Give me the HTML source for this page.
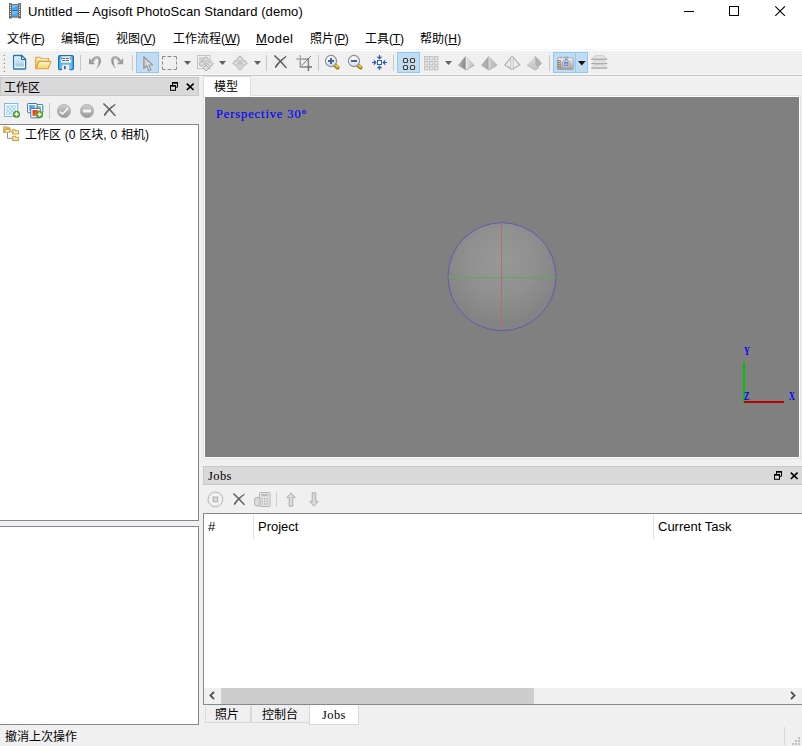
<!DOCTYPE html>
<html lang="zh-CN">
<head>
<meta charset="utf-8">
<title>Untitled — Agisoft PhotoScan Standard (demo)</title>
<style>
*{box-sizing:border-box;margin:0;padding:0}
html,body{width:802px;height:746px;overflow:hidden}
body{position:relative;background:#f0f0f0;font-family:"Liberation Sans","Noto Sans CJK SC",sans-serif;font-size:12px;color:#000}
.abs{position:absolute}
#titlebar{left:0;top:0;width:802px;height:30px;background:#fff}
#title{left:28px;top:4px;font-size:13px;letter-spacing:0.07px;line-height:16px;white-space:nowrap}
#menubar{left:0;top:30px;width:802px;height:19px;background:#fff}
.mi{position:absolute;top:31px;font-size:12px;line-height:16px;white-space:nowrap}
.mi u{text-decoration:underline;text-underline-offset:1px}
#toolbar{left:0;top:49px;width:802px;height:26px;background:#f0f0f0}
.sep{position:absolute;top:55px;width:1px;height:16px;background:#c8c8c8}
.hl{position:absolute;background:#c0dcf3;border:1px solid #90c8f6}
.docktitle{position:absolute;background:#d9d9d9;border:1px solid #c8c8c8;height:19px}
.box{position:absolute;background:#fff;border:1px solid #828790}
.ser{font-family:"Liberation Serif",serif}
.mono{font-family:"Liberation Mono",monospace}
svg{position:absolute;overflow:visible}
</style>
</head>
<body>
<!-- TITLE BAR -->
<div id="titlebar" class="abs"></div>
<div id="title" class="abs">Untitled — Agisoft PhotoScan Standard (demo)</div>
<svg style="left:9px;top:3px" width="12" height="16" viewBox="0 0 12 16">
<rect x="0" y="0" width="2.8" height="15.6" rx="0.8" fill="#5a5a5a"/><rect x="9.2" y="0" width="2.8" height="15.6" rx="0.8" fill="#5a5a5a"/>
<rect x="2.6" y="1" width="6.8" height="13.6" fill="#7a5a48"/>
<rect x="3" y="1.8" width="6" height="5.2" fill="#3fa9f5"/><rect x="3" y="8" width="6" height="5.6" fill="#3fa9f5"/>
<path d="M3 5.5 L9 2.5 V1.8 H3Z M3 12 L9 9 V8 H3Z" fill="#7cc8ff" opacity=".7"/>
<g fill="#e8e8e8"><rect x=".8" y="1.6" width="1.2" height="1.2"/><rect x=".8" y="3.7" width="1.2" height="1.2"/><rect x=".8" y="5.8" width="1.2" height="1.2"/><rect x=".8" y="7.9" width="1.2" height="1.2"/><rect x=".8" y="10" width="1.2" height="1.2"/><rect x=".8" y="12.1" width="1.2" height="1.2"/>
<rect x="10" y="1.6" width="1.2" height="1.2"/><rect x="10" y="3.7" width="1.2" height="1.2"/><rect x="10" y="5.8" width="1.2" height="1.2"/><rect x="10" y="7.9" width="1.2" height="1.2"/><rect x="10" y="10" width="1.2" height="1.2"/><rect x="10" y="12.1" width="1.2" height="1.2"/></g>
</svg>
<div class="abs" style="left:684px;top:11px;width:10px;height:1px;background:#000"></div>
<div class="abs" style="left:729px;top:6px;width:10px;height:10px;border:1px solid #000"></div>
<svg style="left:775px;top:6px" width="10" height="10" viewBox="0 0 10 10"><path d="M0.3 0.3 L9.9 9.9 M9.9 0.3 L0.3 9.9" stroke="#000" stroke-width="1.1" fill="none"/></svg>
<!-- MENU BAR -->
<div id="menubar" class="abs"></div>
<div class="mi" style="left:7px">文件<span style="letter-spacing:-0.77px">(<u>F</u>)</span></div>
<div class="mi" style="left:61px">编辑<span style="letter-spacing:-0.83px">(<u>E</u>)</span></div>
<div class="mi" style="left:116px">视图<span style="letter-spacing:-0.17px">(<u>V</u>)</span></div>
<div class="mi" style="left:173px">工作流程<span style="letter-spacing:-0.10px">(<u>W</u>)</span></div>
<div class="mi" style="left:256px;font-size:13px;letter-spacing:.4px"><u>M</u>odel</div>
<div class="mi" style="left:310px">照片<span style="letter-spacing:-0.67px">(<u>P</u>)</span></div>
<div class="mi" style="left:365px">工具<span style="letter-spacing:-0.17px">(<u>T</u>)</span></div>
<div class="mi" style="left:420px">帮助<span style="letter-spacing:0.23px">(<u>H</u>)</span></div>
<!-- TOOLBAR -->
<div id="toolbar" class="abs"></div>

<div class="abs" style="left:0;top:49px;width:802px;height:1px;background:#f5f5f5"></div><div class="abs" style="left:0;top:50px;width:802px;height:1px;background:#fff"></div>
<!-- handle -->
<svg style="left:2px;top:53px" width="3" height="19" viewBox="0 0 3 19"><g fill="#9c9c9c"><rect x="2" y="2" width="1" height="1"/><rect x="2" y="6" width="1" height="1"/><rect x="2" y="10" width="1" height="1"/><rect x="2" y="14" width="1" height="1"/><rect x="2" y="18" width="1" height="1"/></g><g fill="#d0d0d0"><rect x="1" y="2" width="1" height="1"/><rect x="2" y="1" width="1" height="1"/><rect x="1" y="6" width="1" height="1"/><rect x="2" y="5" width="1" height="1"/><rect x="1" y="10" width="1" height="1"/><rect x="2" y="9" width="1" height="1"/><rect x="1" y="14" width="1" height="1"/><rect x="2" y="13" width="1" height="1"/><rect x="1" y="18" width="1" height="1"/><rect x="2" y="17" width="1" height="1"/></g><g fill="#fff"><rect x="1" y="1" width="1" height="1"/><rect x="1" y="5" width="1" height="1"/><rect x="1" y="9" width="1" height="1"/><rect x="1" y="13" width="1" height="1"/><rect x="1" y="17" width="1" height="1"/></g></svg>
<!-- new -->
<svg style="left:12px;top:54px" width="16" height="16" viewBox="0 0 16 16">
<defs><linearGradient id="gnew" x1="0" y1="0" x2="0" y2="1"><stop offset="0" stop-color="#e2eef6"/><stop offset=".66" stop-color="#b4d6e8"/><stop offset=".67" stop-color="#9ec9e0"/><stop offset="1" stop-color="#c4deec"/></linearGradient></defs>
<path d="M1.6 1.9 Q1.6 1.5 2 1.5 H9.8 L13.6 5.3 V14.6 Q13.6 15 13.2 15 H2 Q1.6 15 1.6 14.6Z" fill="#fff" stroke="#2276b6" stroke-width="1.3" stroke-linejoin="round"/>
<path d="M3.2 3.1 H9.2 V5.9 H12 V13.2 H3.2Z" fill="url(#gnew)"/>
<path d="M9.5 1.8 V4.4 Q9.5 5.5 10.6 5.5 H13.3" fill="none" stroke="#1c5fa0" stroke-width="1.2"/>
</svg>
<!-- open -->
<svg style="left:35px;top:56px" width="17" height="14" viewBox="0 0 17 14">
<defs><linearGradient id="gfol" x1="0" y1="0" x2="0" y2="1"><stop offset="0" stop-color="#fdf2c0"/><stop offset="1" stop-color="#f7d468"/></linearGradient><linearGradient id="gfob" x1="0" y1="0" x2="0" y2="1"><stop offset="0" stop-color="#fbe7a6"/><stop offset="1" stop-color="#f3cf72"/></linearGradient></defs>
<path d="M.7 12.4 V2 Q.7 1.2 1.5 1.2 H4.6 L6 2.6 H13 Q13.8 2.6 13.8 3.4 V5.4 H3.6 L.9 12.4Z" fill="url(#gfob)" stroke="#d9a040" stroke-width="1.1" stroke-linejoin="round"/>
<path d="M2.2 3.2 H12.6" stroke="#fff6d8" stroke-width=".9"/>
<path d="M1 12.8 L3.8 5.6 H16 L13.2 12.8Z" fill="url(#gfol)" stroke="#d9a040" stroke-width="1.1" stroke-linejoin="round"/>
<path d="M4.6 6.8 H14.4" stroke="#fffbe6" stroke-width=".9"/>
</svg>
<!-- save -->
<svg style="left:58px;top:55px" width="16" height="16" viewBox="0 0 16 16">
<defs><linearGradient id="gsav" x1="0" y1="0" x2="0" y2="1"><stop offset="0" stop-color="#4aa4ea"/><stop offset="1" stop-color="#6cc0f8"/></linearGradient></defs>
<rect x=".65" y=".65" width="14.7" height="13.9" rx="1.2" fill="url(#gsav)" stroke="#1a6fb4" stroke-width="1.3"/>
<rect x="2.8" y="1.4" width="10.4" height="6.2" fill="#fff"/>
<g fill="#4a5560"><rect x="4.2" y="2.9" width="3" height="1"/><rect x="7.8" y="2.9" width="3" height="1"/><rect x="4.2" y="5.1" width="3" height="1"/><rect x="7.8" y="5.1" width="3" height="1"/><rect x="11.8" y="2.2" width=".9" height="2.2"/><rect x="3" y="2.2" width=".9" height="2.2" fill="#2a7cc4"/></g>
<rect x="4.1" y="9.7" width="7.2" height="5.4" fill="#ececec"/><rect x="6.2" y="11" width="1.4" height="3.2" fill="#3a3a3a"/>
<rect x="3" y="15" width="9.4" height=".8" fill="#fafafa"/>
</svg>
<div class="sep" style="left:80px"></div>
<!-- undo -->
<svg style="left:88px;top:55px" width="14" height="15" viewBox="88 55 14 15">
<defs><linearGradient id="gun" x1="0" y1="0" x2="0" y2="1"><stop offset="0" stop-color="#b8b8b8"/><stop offset=".5" stop-color="#8e8e8e"/><stop offset="1" stop-color="#b0b0b0"/></linearGradient></defs>
<path d="M89 58 V64.2 H95.2Z" fill="#9a9a9a"/>
<path d="M91.2 60.2 Q94 55.7 97.6 56 Q101.3 56.8 101 61 Q100.6 65.4 96 69 Q98.7 65 98.7 61.6 Q98.6 58.6 96.6 58.4 Q94.8 58.5 93.6 62Z" fill="url(#gun)"/>
</svg>
<!-- redo -->
<svg style="left:110px;top:55px" width="14" height="15" viewBox="88 55 14 15">
<g transform="translate(190.2,0) scale(-1,1)"><path d="M89 58 V64.2 H95.2Z" fill="#9a9a9a"/>
<path d="M91.2 60.2 Q94 55.7 97.6 56 Q101.3 56.8 101 61 Q100.6 65.4 96 69 Q98.7 65 98.7 61.6 Q98.6 58.6 96.6 58.4 Q94.8 58.5 93.6 62Z" fill="url(#gun)"/></g>
</svg>
<div class="sep" style="left:132px"></div>
<!-- select arrow (active) -->
<div class="hl" style="left:136px;top:52px;width:23px;height:21px"></div>
<svg style="left:143px;top:56px" width="11" height="16" viewBox="0 0 11 16">
<defs><linearGradient id="gcur" x1="0" y1="0" x2="1" y2="0"><stop offset="0" stop-color="#c4c4c4"/><stop offset="1" stop-color="#fafafa"/></linearGradient></defs><path d="M.8 .8 V12.4 L3.6 9.8 L5.8 14.8 L8 13.8 L5.8 9 H9.6Z" fill="url(#gcur)" stroke="#999" stroke-width="1.2" stroke-linejoin="round"/>
</svg>
<!-- rect select -->
<svg style="left:162px;top:56px" width="15" height="14" viewBox="0 0 15 14">
<path d="M.5 3.5 V.5 H3.5 M5.5 .5 H9.5 M11.5 .5 H14.5 V3.5 M14.5 5.5 V8.5 M14.5 10.5 V13.5 H11.5 M9.5 13.5 H5.5 M3.5 13.5 H.5 V10.5 M.5 8.5 V5.5" fill="none" stroke="#8a8a8a" stroke-width="1"/>
</svg>
<svg style="left:184px;top:61px" width="7" height="4" viewBox="0 0 7 4"><path d="M0 0 H7 L3.5 4Z" fill="#606060"/></svg>
<!-- move region -->
<svg style="left:197px;top:55px" width="17" height="17" viewBox="197 55 17 17">
<defs><linearGradient id="gmr" x1="0" y1="0" x2="1" y2="1"><stop offset="0" stop-color="#c4c4c4"/><stop offset=".7" stop-color="#eeeeee"/></linearGradient></defs>
<rect x="197.5" y="55.5" width="12.6" height="13" fill="#fbfbfb" stroke="#c2c2c2"/>
<rect x="198.8" y="56.8" width="10" height="10.4" fill="url(#gmr)"/>
<g fill="#dcdcdc" stroke="#a6a6a6" stroke-width=".9" stroke-linejoin="round"><path d="M206.0 56.6 L209.0 59.6 L206.0 62.6 L203.0 59.6Z"/><path d="M206.0 65.0 L209.0 68.0 L206.0 71.0 L203.0 68.0Z"/><path d="M201.8 60.8 L204.8 63.8 L201.8 66.8 L198.8 63.8Z"/><path d="M210.2 60.8 L213.2 63.8 L210.2 66.8 L207.2 63.8Z"/></g><circle cx="206.0" cy="63.8" r="1.5" fill="#c8c8c8"/>
</svg>
<svg style="left:219px;top:61px" width="7" height="4" viewBox="0 0 7 4"><path d="M0 0 H7 L3.5 4Z" fill="#606060"/></svg>
<!-- move object -->
<svg style="left:232px;top:55px" width="16" height="16" viewBox="232 55 16 16">
<g fill="#dcdcdc" stroke="#a6a6a6" stroke-width=".9" stroke-linejoin="round"><path d="M240.0 55.8 L243.0 58.8 L240.0 61.8 L237.0 58.8Z"/><path d="M240.0 64.2 L243.0 67.2 L240.0 70.2 L237.0 67.2Z"/><path d="M235.8 60.0 L238.8 63.0 L235.8 66.0 L232.8 63.0Z"/><path d="M244.2 60.0 L247.2 63.0 L244.2 66.0 L241.2 63.0Z"/></g><circle cx="240.0" cy="63.0" r="1.5" fill="#c8c8c8"/>
</svg>
<svg style="left:254px;top:61px" width="7" height="4" viewBox="0 0 7 4"><path d="M0 0 H7 L3.5 4Z" fill="#606060"/></svg>
<div class="sep" style="left:266px"></div>
<!-- delete X -->
<svg style="left:274px;top:55px" width="13" height="14" viewBox="0 0 13 14">
<path d="M.8 .9 Q6.5 6 12 12.4" fill="none" stroke="#666" stroke-width="1.5" stroke-linecap="round"/>
<path d="M12.3 1.4 Q10 3.4 6.4 6.8 Q3.8 9.4 1.9 12.6 L1.2 12 Q3 8.6 5.8 6 Q9.6 2.8 12.3 1.4Z" fill="#606060" stroke="#606060" stroke-width="1" stroke-linejoin="round"/>
</svg>
<!-- crop -->
<svg style="left:296px;top:55px" width="16" height="16" viewBox="0 0 16 16">
<defs><linearGradient id="gcrop" gradientUnits="userSpaceOnUse" x1="0" y1="0" x2="16" y2="16"><stop offset="0" stop-color="#bcbcbc"/><stop offset="1" stop-color="#666"/></linearGradient></defs>
<path d="M4.3 0 V12.1 H16 M0 4 H12.4 V16" fill="none" stroke="url(#gcrop)" stroke-width="1.5"/>
<path d="M5.8 10.6 L15 1" stroke="#555" stroke-width=".8"/>
</svg>
<div class="sep" style="left:318px"></div>
<!-- zoom in -->
<svg style="left:324px;top:54px" width="17" height="17" viewBox="0 0 17 17">
<defs><radialGradient id="ggl" cx=".4" cy=".3" r=".8"><stop offset="0" stop-color="#fff"/><stop offset="1" stop-color="#c4d6f0"/></radialGradient></defs>
<path d="M10.6 11 L13.6 13.5" stroke="#a07410" stroke-width="4" stroke-linecap="round"/><path d="M10.8 10.7 L13.6 12.9" stroke="#f4cc40" stroke-width="2" stroke-linecap="round"/>
<circle cx="7" cy="7" r="5.6" fill="url(#ggl)" stroke="#8e8e8e" stroke-width="1.1"/>
<path d="M4 7 H10 M7 4 V10" stroke="#46648f" stroke-width="2"/>
</svg>
<!-- zoom out -->
<svg style="left:347px;top:54px" width="17" height="17" viewBox="0 0 17 17">
<path d="M10.6 11 L13.6 13.5" stroke="#a07410" stroke-width="4" stroke-linecap="round"/><path d="M10.8 10.7 L13.6 12.9" stroke="#f4cc40" stroke-width="2" stroke-linecap="round"/>
<circle cx="7" cy="7" r="5.6" fill="url(#ggl)" stroke="#8e8e8e" stroke-width="1.1"/>
<path d="M4 7 H10" stroke="#46648f" stroke-width="2"/>
</svg>
<!-- fit -->
<svg style="left:372px;top:55px" width="15" height="15" viewBox="0 0 15 15">
<g fill="#2f5fae"><path d="M7.5 4.6 L4.6 1.8 H6.9 V0 H8.1 V1.8 H10.4Z"/><path d="M7.5 10.4 L4.6 13.2 H6.9 V15 H8.1 V13.2 H10.4Z"/><path d="M4.6 7.5 L1.8 4.6 V6.9 H0 V8.1 H1.8 V10.4Z"/><path d="M10.4 7.5 L13.2 4.6 V6.9 H15 V8.1 H13.2 V10.4Z"/></g>
<rect x="5.5" y="5.5" width="4" height="4" fill="#fff" stroke="#2f5fae" stroke-width="1"/>
</svg>
<div class="sep" style="left:393px"></div>
<!-- view 4 (active) -->
<div class="hl" style="left:397px;top:52px;width:23px;height:21px"></div>
<svg style="left:402px;top:57px" width="14" height="14" viewBox="0 0 14 14">
<g fill="#ececec" stroke="#383838" stroke-width="1.2"><rect x="1.5" y="1.5" width="4" height="4" rx="1.3"/><rect x="8.5" y="1.5" width="4" height="4" rx="1.3"/><rect x="1.5" y="8.5" width="4" height="4" rx="1.3"/><rect x="8.5" y="8.5" width="4" height="4" rx="1.3"/></g>
</svg>
<!-- grid 9 -->
<svg style="left:424px;top:56px" width="15" height="15" viewBox="0 0 15 15">
<g fill="#e6e6e6" stroke="#bcbcbc" stroke-width=".9"><rect x=".5" y=".5" width="3.4" height="3.4"/><rect x="5.5" y=".5" width="3.4" height="3.4"/><rect x="10.5" y=".5" width="3.4" height="3.4"/><rect x=".5" y="5.5" width="3.4" height="3.4"/><rect x="5.5" y="5.5" width="3.4" height="3.4"/><rect x="10.5" y="5.5" width="3.4" height="3.4"/><rect x=".5" y="10.5" width="3.4" height="3.4"/><rect x="5.5" y="10.5" width="3.4" height="3.4"/><rect x="10.5" y="10.5" width="3.4" height="3.4"/></g>
</svg>
<svg style="left:445px;top:61px" width="7" height="4" viewBox="0 0 7 4"><path d="M0 0 H7 L3.5 4Z" fill="#606060"/></svg>
<!-- pyramids -->
<svg style="left:458px;top:55px" width="17" height="16" viewBox="0 0 17 16">
<defs><linearGradient id="gp1" x1="0" y1="0" x2="1" y2="0"><stop offset="0" stop-color="#b4b4b4"/><stop offset="1" stop-color="#858585"/></linearGradient><linearGradient id="gp2" x1="0" y1="0" x2="1" y2="0"><stop offset="0" stop-color="#e6e6e6"/><stop offset="1" stop-color="#b8b8b8"/></linearGradient></defs>
<path d="M8 .8 L.2 10 L8 15Z" fill="url(#gp1)"/><path d="M8 .8 L16.2 10 L8 15Z" fill="url(#gp2)"/><path d="M8 1 V15" stroke="#f4f4f4" stroke-width=".8"/>
<path d="M.2 10 L8 15 L16.2 10" fill="none" stroke="#9a9a9a" stroke-width=".8"/>
</svg>
<svg style="left:481px;top:55px" width="17" height="16" viewBox="0 0 17 16">
<defs><linearGradient id="gp3" x1="0" y1="0" x2="1" y2="0"><stop offset="0" stop-color="#bcbcbc"/><stop offset="1" stop-color="#a4a4a4"/></linearGradient><linearGradient id="gp3b" x1="0" y1="0" x2="1" y2="0"><stop offset="0" stop-color="#cecece"/><stop offset="1" stop-color="#b0b0b0"/></linearGradient></defs>
<path d="M8 .8 L.2 10 L8 15Z" fill="url(#gp3)"/><path d="M8 .8 L16.2 10 L8 15Z" fill="url(#gp3b)"/><path d="M8 1 V15" stroke="#e6e6e6" stroke-width=".8"/>
<path d="M.2 10 L8 15 L16.2 10" fill="none" stroke="#a4a4a4" stroke-width=".8"/>
</svg>
<svg style="left:504px;top:55px" width="17" height="16" viewBox="0 0 17 16">
<path d="M8 1.2 L.8 10 L8 14.6 L15.8 10Z" fill="#ececec" stroke="#b2b2b2" stroke-width="1.2" stroke-linejoin="round"/>
<path d="M7 2.6 V13.8 M9 2.6 V13.8" stroke="#a6a6a6" stroke-width=".9"/><path d="M8 2 V14" stroke="#fafafa" stroke-width="1"/>
</svg>
<svg style="left:527px;top:55px" width="17" height="16" viewBox="0 0 17 16">
<defs><linearGradient id="gp4" x1="0" y1="0" x2="0" y2="1"><stop offset="0" stop-color="#e0e0e0"/><stop offset="1" stop-color="#c4c4c4"/></linearGradient></defs>
<path d="M8 .8 L.2 10 L8 15 L16.2 10Z" fill="url(#gp4)"/>
<path d="M8 .8 L8.4 9.4 L13.6 6.6Z" fill="#b0b0b0"/><path d="M8.4 9.4 L13.6 6.6 L15 8.6 L10.6 12Z" fill="#a2a2a2" opacity=".7"/>
<path d="M11 12.4 L15 9 L16.2 10 L12.4 12.6Z" fill="#fafafa"/>
<path d="M.2 10 L8 15 L12 12.6" fill="none" stroke="#a8a8a8" stroke-width=".8"/>
</svg>
<div class="sep" style="left:549px"></div>
<!-- camera (active) -->
<div class="hl" style="left:553px;top:52px;width:23px;height:21px"></div>
<div class="hl" style="left:575px;top:52px;width:13px;height:21px"></div>
<svg style="left:557px;top:56px" width="17" height="14" viewBox="0 0 17 14">
<defs><linearGradient id="gcam" x1="0" y1="0" x2="0" y2="1"><stop offset="0" stop-color="#f2f2f2"/><stop offset=".5" stop-color="#d0d0d0"/><stop offset="1" stop-color="#9a9a9a"/></linearGradient></defs>
<rect x="2.2" y=".9" width="3" height="1.4" fill="#9a9a9a"/><rect x="7" y=".6" width="4.2" height="1.6" fill="#a8a8a8"/>
<rect x=".4" y="1.8" width="15.8" height="11.8" rx="1.2" fill="url(#gcam)" stroke="#9c9c9c" stroke-width=".8"/>
<rect x=".8" y="4" width="2.8" height="9" fill="#7c7c7c"/>
<g fill="#d0d0d0"><circle cx="2.2" cy="5.4" r=".8"/><circle cx="2.2" cy="7.6" r=".8"/><circle cx="2.2" cy="9.8" r=".8"/><circle cx="2.2" cy="12" r=".8"/></g>
<circle cx="9.2" cy="8" r="4" fill="#cfc9c2" stroke="#a09a94" stroke-width=".8"/>
<rect x="7.2" y="6" width="4" height="4" rx="1" fill="#4f78f2"/><rect x="8" y="7.4" width="2.4" height="1.6" fill="#c6ccff"/>
<rect x="7.8" y="2.6" width="2.8" height="1.2" fill="#2c9cf0"/>
</svg>
<svg style="left:578px;top:61px" width="8" height="5" viewBox="0 0 8 5"><path d="M0 0 H7.6 L3.8 4.4Z" fill="#111"/></svg>
<!-- layers -->
<svg style="left:591px;top:55px" width="17" height="14" viewBox="0 0 17 14">
<g fill="#e2e2e2" stroke="#c6c6c6" stroke-width=".8"><path d="M4.6 9.2 H12 L16.2 13 H.4Z"/><path d="M4.6 4.8 H12 L16.2 8.6 H.4Z"/><path d="M4.6 .6 H12 L16.2 4.2 H.4Z"/></g>
<g fill="#a2a2a2"><rect x=".4" y="3.8" width="15.8" height="1"/><rect x=".4" y="8.2" width="15.8" height="1"/><rect x=".4" y="12.6" width="15.8" height="1"/></g>
</svg>
<div class="abs" style="left:0;top:74px;width:802px;height:1px;background:#f8f8f8"></div>
<div class="abs" style="left:0;top:75px;width:802px;height:1px;background:#c4c4c4"></div>
<div class="abs" style="left:0;top:76px;width:802px;height:1px;background:#f6f6f6"></div>
<!-- LEFT DOCK -->
<div class="docktitle" style="left:0;top:77px;width:199px"></div>
<div class="abs" style="left:4px;top:80px;font-size:12px;line-height:17px">工作区</div>

<!-- dock buttons -->
<svg style="left:170px;top:82px" width="9" height="9" viewBox="0 0 9 9"><path d="M2.5 3 V.5 H7.5 V5.2 H6" fill="none" stroke="#000" stroke-width="1"/><rect x="2" y="0" width="6" height="1.7" fill="#000"/><rect x=".5" y="3.5" width="5" height="4.8" fill="none" stroke="#000" stroke-width="1"/><rect x="0" y="3" width="6" height="1.7" fill="#000"/></svg>
<svg style="left:186px;top:83px" width="9" height="8" viewBox="0 0 9 8"><path d="M.8 .6 L7.6 7 M7.6 .6 L.8 7" stroke="#000" stroke-width="1.7" fill="none"/></svg>
<!-- dock toolbar icons -->
<svg style="left:4px;top:103px" width="17" height="16" viewBox="0 0 17 16">
<defs><pattern id="chk" x="1" y="1" width="4" height="4" patternUnits="userSpaceOnUse"><rect width="4" height="4" fill="#ddeefc"/><rect width="2" height="2" fill="#a9d3f7"/><rect x="2" y="2" width="2" height="2" fill="#a9d3f7"/></pattern><radialGradient id="ggr" cx=".5" cy=".4" r=".6"><stop offset="0" stop-color="#6cc02c"/><stop offset="1" stop-color="#3a8c10"/></radialGradient></defs>
<rect x=".5" y=".5" width="13.2" height="13" fill="#fff" stroke="#7db9ec" stroke-width="1"/>
<rect x="2" y="2" width="10.2" height="10" fill="url(#chk)"/>
<circle cx="12.5" cy="11.3" r="3.5" fill="url(#ggr)"/><path d="M10.5 11.3 H14.5 M12.5 9.3 V13.3" stroke="#fff" stroke-width="1.4"/>
</svg>
<svg style="left:27px;top:103px" width="17" height="16" viewBox="0 0 17 16">
<defs><linearGradient id="gph1" x1="0" y1="0" x2="1" y2="1"><stop offset="0" stop-color="#1f84ec"/><stop offset="1" stop-color="#a8d8ff"/></linearGradient><linearGradient id="gph2" x1="0" y1="0" x2="1" y2="1"><stop offset="0" stop-color="#e81818"/><stop offset="1" stop-color="#ff9c30"/></linearGradient><linearGradient id="gph3" x1="0" y1="0" x2="1" y2="1"><stop offset="0" stop-color="#7aa82a"/><stop offset="1" stop-color="#d4e88a"/></linearGradient></defs>
<rect x="7.4" y="1.6" width="8.4" height="7.8" rx=".6" fill="#fff" stroke="#3a78b8" stroke-width="1"/><rect x="9" y="3.2" width="5.2" height="4.6" fill="url(#gph3)"/>
<rect x=".6" y=".5" width="9.4" height="9.2" rx=".6" fill="#fff" stroke="#3a78b8" stroke-width="1"/><rect x="2.3" y="2.2" width="6" height="5.8" fill="url(#gph1)"/>
<rect x="3.8" y="5.4" width="9.4" height="9.4" rx=".6" fill="#fff" stroke="#3a78b8" stroke-width="1"/><rect x="5.5" y="7.1" width="6" height="6" fill="url(#gph2)"/>
<circle cx="12.6" cy="11.5" r="3.5" fill="url(#ggr)"/><path d="M10.6 11.5 H14.6 M12.6 9.5 V13.5" stroke="#fff" stroke-width="1.4"/>
</svg>
<div class="abs" style="left:49px;top:103px;width:1px;height:16px;background:#c8c8c8"></div>
<svg style="left:57px;top:104px" width="14" height="14" viewBox="0 0 14 14">
<defs><linearGradient id="gck" x1="0" y1="0" x2="0" y2="1"><stop offset="0" stop-color="#cecece"/><stop offset="1" stop-color="#989898"/></linearGradient></defs>
<circle cx="7" cy="7" r="6.7" fill="url(#gck)" stroke="#a8a8a8" stroke-width=".6"/>
<path d="M2.8 7.6 L5.6 10 L11.4 3.8" fill="none" stroke="#fafafa" stroke-width="1.5"/>
</svg>
<svg style="left:80px;top:104px" width="14" height="14" viewBox="0 0 14 14">
<circle cx="7" cy="7" r="6.7" fill="url(#gck)" stroke="#a8a8a8" stroke-width=".6"/>
<rect x="3" y="5.4" width="8" height="3" rx=".6" fill="#f4f4f4"/>
</svg>
<svg style="left:103px;top:103px" width="13" height="14" viewBox="0 0 13 14">
<path d="M.8 .9 Q6.5 6 12 12.4" fill="none" stroke="#666" stroke-width="1.5" stroke-linecap="round"/>
<path d="M12.3 1.4 Q10 3.4 6.4 6.8 Q3.8 9.4 1.9 12.6 L1.2 12 Q3 8.6 5.8 6 Q9.6 2.8 12.3 1.4Z" fill="#606060" stroke="#606060" stroke-width="1" stroke-linejoin="round"/>
</svg>
<div class="box" style="left:-1px;top:124px;width:200px;height:397px"></div>
<div class="abs" style="left:25px;top:127px;font-size:12px;line-height:17px;white-space:nowrap;word-spacing:.5px">工作区 (0 区块, 0 相机)</div>

<!-- tree icon -->
<svg style="left:3px;top:126px" width="17" height="16" viewBox="3 126 17 16">
<path d="M7.5 132.6 V138.3 H12.4 M10.4 131.7 H12.4" fill="none" stroke="#8c8c8c" stroke-width="1"/>
<g fill="#fbe9a8" stroke="#d89a30" stroke-width="1.1" stroke-linejoin="round"><path d="M3.8 126.8 H6.4 L7.2 127.8 H9.6 V129 H5.2 L3.8 132.2Z"/><path d="M3.9 132.3 L5.4 129.2 H10.6 L9.4 132.3Z" fill="#fdf3c4"/>
<path d="M12.8 129.8 H15 L15.8 130.8 H18.4 V134 H12.8Z"/><path d="M12.8 136.2 H15 L15.8 137.2 H18.4 V140.4 H12.8Z"/></g>
<g fill="#fffbe6"><rect x="13.8" y="131.8" width="3.6" height="1"/><rect x="13.8" y="138.2" width="3.6" height="1"/></g>
</svg>
<div class="box" style="left:-1px;top:526px;width:200px;height:199px"></div>
<!-- MODEL TAB -->
<div class="abs" style="left:203px;top:95px;width:598px;height:364px;background:#fff;border:1px solid #e2e2e2"></div>
<div class="abs" style="left:203px;top:76px;width:48px;height:21px;background:#fff;border:1px solid #dcdcdc;border-bottom:none"></div>
<div class="abs" style="left:214px;top:79px;font-size:12px;line-height:17px">模型</div>
<div class="abs" style="left:205px;top:97px;width:594px;height:360px;background:#808080"></div>
<div class="abs ser" style="left:216px;top:107px;font-size:12.5px;letter-spacing:.88px;line-height:14px;color:#0000ff;-webkit-text-stroke:.15px #0000ff;white-space:pre">Perspective 30°</div>

<!-- sphere -->
<svg style="left:440px;top:215px" width="124" height="124" viewBox="440 215 124 124">
<defs><radialGradient id="gsph" gradientUnits="userSpaceOnUse" cx="501" cy="262" r="62"><stop offset="0" stop-color="#989898"/><stop offset=".55" stop-color="#909090"/><stop offset="1" stop-color="#838383"/></radialGradient></defs>
<circle cx="502" cy="276.7" r="54" fill="url(#gsph)" stroke="#5c5cb0" stroke-width="1"/>
<path d="M448 277.5 H556" stroke="#5ea85e" stroke-width="1"/>
<path d="M501.5 223 V330.5" stroke="#b86a6a" stroke-width="1"/>
</svg>
<!-- axes -->
<div class="abs" style="left:743px;top:362px;width:2px;height:40px;background:#00c000"></div>
<div class="abs" style="left:744px;top:401px;width:40px;height:2px;background:#c00000"></div>
<div class="abs ser" style="left:744px;top:345px;font-size:12px;line-height:12px;font-weight:bold;color:#0000ff;transform:scaleX(.68);transform-origin:0 0">Y</div>
<div class="abs ser" style="left:744px;top:390px;font-size:12px;line-height:12px;font-weight:bold;color:#0000ff;transform:scaleX(.68);transform-origin:0 0">Z</div>
<div class="abs ser" style="left:789px;top:390px;font-size:12px;line-height:12px;font-weight:bold;color:#0000ff;transform:scaleX(.68);transform-origin:0 0">X</div>
<!-- JOBS DOCK -->
<div class="docktitle" style="left:203px;top:466px;width:600px"></div>
<div class="abs ser" style="left:208px;top:469px;font-size:12.5px;letter-spacing:.4px;line-height:14px">Jobs</div>

<svg style="left:774px;top:471px" width="9" height="9" viewBox="0 0 9 9"><path d="M2.5 3 V.5 H7.5 V5.2 H6" fill="none" stroke="#000" stroke-width="1"/><rect x="2" y="0" width="6" height="1.7" fill="#000"/><rect x=".5" y="3.5" width="5" height="4.8" fill="none" stroke="#000" stroke-width="1"/><rect x="0" y="3" width="6" height="1.7" fill="#000"/></svg>
<svg style="left:790px;top:472px" width="9" height="8" viewBox="0 0 9 8"><path d="M.8 .6 L7.6 7 M7.6 .6 L.8 7" stroke="#000" stroke-width="1.7" fill="none"/></svg>
<!-- jobs toolbar -->
<svg style="left:207px;top:491px" width="17" height="17" viewBox="0 0 17 17">
<circle cx="8.4" cy="8.4" r="7.4" fill="#f6f6f6" stroke="#b4b4b4" stroke-width="1"/>
<circle cx="8.4" cy="8.4" r="5.9" fill="none" stroke="#e2e2e2" stroke-width=".8"/><rect x="6" y="6" width="4.8" height="4.8" fill="#d8d8d8" stroke="#b0b0b0" stroke-width="1"/>
</svg>
<svg style="left:233px;top:493px" width="12" height="13" viewBox="0 0 13 14">
<path d="M.8 .9 Q6.5 6 12 12.4" fill="none" stroke="#666" stroke-width="1.5" stroke-linecap="round"/>
<path d="M12.3 1.4 Q10 3.4 6.4 6.8 Q3.8 9.4 1.9 12.6 L1.2 12 Q3 8.6 5.8 6 Q9.6 2.8 12.3 1.4Z" fill="#606060" stroke="#606060" stroke-width="1" stroke-linejoin="round"/>
</svg>
<svg style="left:254px;top:492px" width="17" height="15" viewBox="0 0 17 15">
<rect x="5.5" y=".5" width="10.6" height="14" rx="1.2" fill="#e4e4e4" stroke="#b4b4b4" stroke-width="1"/>
<rect x="7.4" y="2" width="6.8" height="2.2" fill="#bcbcbc"/>
<g fill="#b0b0b0"><rect x="7.4" y="6" width="1.4" height="1.4"/><rect x="10" y="6" width="1.4" height="1.4"/><rect x="12.6" y="6" width="1.4" height="1.4"/><rect x="7.4" y="8.6" width="1.4" height="1.4"/><rect x="10" y="8.6" width="1.4" height="1.4"/><rect x="12.6" y="8.6" width="1.4" height="1.4"/><rect x="7.4" y="11.2" width="1.4" height="1.4"/><rect x="10" y="11.2" width="1.4" height="1.4"/><rect x="12.6" y="11.2" width="1.4" height="1.4"/></g>
<rect x=".6" y="5.4" width="5.4" height="8.6" rx="2.4" fill="#dcdcdc" stroke="#b0b0b0" stroke-width="1"/>
</svg>
<div class="abs" style="left:276px;top:492px;width:1px;height:15px;background:#cfcfcf"></div>
<svg style="left:286px;top:492px" width="10" height="15" viewBox="0 0 10 15">
<path d="M5 .8 L9.2 5.6 H6.8 V14.2 H3.2 V5.6 H.8Z" fill="#dadada" stroke="#b0b0b0" stroke-width="1" stroke-linejoin="round"/>
</svg>
<svg style="left:309px;top:492px" width="10" height="15" viewBox="0 0 10 15">
<path d="M5 14.2 L9.2 9.4 H6.8 V.8 H3.2 V9.4 H.8Z" fill="#dadada" stroke="#b0b0b0" stroke-width="1" stroke-linejoin="round"/>
</svg>
<div class="box" style="left:203px;top:513px;width:600px;height:192px;border-right:none"></div>
<div class="abs" style="left:204px;top:688px;width:598px;height:16px;background:#f0f0f0"></div>
<div class="abs" style="left:221px;top:688px;width:313px;height:16px;background:#cdcdcd"></div>

<svg style="left:209px;top:691px" width="6" height="9" viewBox="0 0 6 9"><path d="M5 .8 L1.4 4.5 L5 8.2" fill="none" stroke="#505050" stroke-width="1.8"/></svg>
<svg style="left:790px;top:691px" width="6" height="9" viewBox="0 0 6 9"><path d="M1 .8 L4.6 4.5 L1 8.2" fill="none" stroke="#505050" stroke-width="1.8"/></svg>
<div class="abs" style="left:253px;top:514px;width:1px;height:25px;background:#e5e5e5"></div>
<div class="abs" style="left:653px;top:514px;width:1px;height:25px;background:#e5e5e5"></div>
<div class="abs" style="left:208px;top:518px;font-size:13px;line-height:17px">#</div>
<div class="abs" style="left:258px;top:518px;font-size:13px;line-height:17px">Project</div>
<div class="abs" style="left:658px;top:518px;font-size:13px;line-height:17px">Current Task</div>
<!-- BOTTOM TABS -->
<div class="abs" style="left:205px;top:706px;width:46px;height:17px;background:#f0f0f0;border:1px solid #d9d9d9;border-top:none"></div>
<div class="abs" style="left:251px;top:706px;width:59px;height:17px;background:#f0f0f0;border:1px solid #d9d9d9;border-top:none"></div>
<div class="abs" style="left:309px;top:705px;width:50px;height:20px;background:#fff;border:1px solid #d9d9d9;border-top:none"></div>
<div class="abs" style="left:215px;top:707px;font-size:12px;line-height:16px">照片</div>
<div class="abs" style="left:262px;top:707px;font-size:12px;line-height:16px">控制台</div>
<div class="abs ser" style="left:322px;top:708px;font-size:12.5px;letter-spacing:.4px;line-height:14px">Jobs</div>
<!-- STATUS BAR -->
<div class="abs" style="left:5px;top:729px;font-size:12px;line-height:17px">撤消上次操作</div>

<div class="abs" style="left:784px;top:727px;width:1px;height:18px;background:#d7d7d7"></div>
<svg style="left:792px;top:737px" width="9" height="9" viewBox="0 0 9 9"><g fill="#bfbfbf"><rect x="6" y="0" width="2" height="2"/><rect x="3" y="3" width="2" height="2"/><rect x="6" y="3" width="2" height="2"/><rect x="0" y="6" width="2" height="2"/><rect x="3" y="6" width="2" height="2"/><rect x="6" y="6" width="2" height="2"/></g></svg>
</body>
</html>
